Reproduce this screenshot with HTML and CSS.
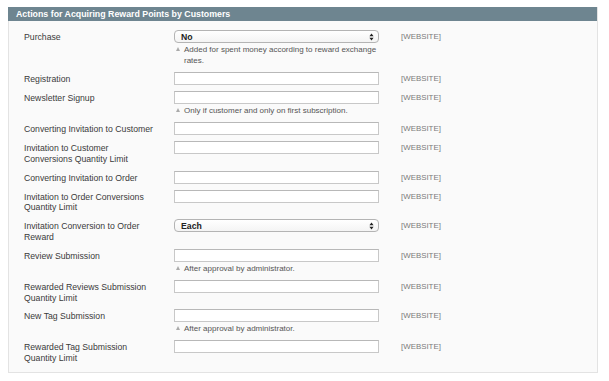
FILE: index.html
```html
<!DOCTYPE html>
<html lang="en">
<head>
  <meta charset="UTF-8" />
  <title>Reward Points</title>
  <link rel="stylesheet" href="styles.css">
</head>
<body>
  <div class="section">
    <div class="section-head">Actions for Acquiring Reward Points by Customers</div>
    <div class="section-body">
      <div class="form-grid">
        <div class="label">Purchase</div>
        <div class="value">
          <div class="select"><span>No</span>
            <svg class="arrows" width="5" height="8" viewBox="0 0 5 8"><path d="M2.5 0.5 L4.6 3.2 H0.4 Z M2.5 7.5 L4.6 4.8 H0.4 Z" fill="#222"/></svg>
          </div>
          <div class="note">Added for spent money according to reward exchange rates.</div>
        </div>
        <div class="scope">[WEBSITE]</div>

        <div class="label">Registration</div>
        <div class="value"><input type="text" class="input"></div>
        <div class="scope">[WEBSITE]</div>

        <div class="label">Newsletter Signup</div>
        <div class="value">
          <input type="text" class="input">
          <div class="note">Only if customer and only on first subscription.</div>
        </div>
        <div class="scope">[WEBSITE]</div>

        <div class="label">Converting Invitation to Customer</div>
        <div class="value"><input type="text" class="input"></div>
        <div class="scope">[WEBSITE]</div>

        <div class="label">Invitation to Customer Conversions Quantity Limit</div>
        <div class="value"><input type="text" class="input"></div>
        <div class="scope">[WEBSITE]</div>

        <div class="label">Converting Invitation to Order</div>
        <div class="value"><input type="text" class="input"></div>
        <div class="scope">[WEBSITE]</div>

        <div class="label">Invitation to Order Conversions Quantity Limit</div>
        <div class="value"><input type="text" class="input"></div>
        <div class="scope">[WEBSITE]</div>

        <div class="label">Invitation Conversion to Order Reward</div>
        <div class="value">
          <div class="select"><span>Each</span>
            <svg class="arrows" width="5" height="8" viewBox="0 0 5 8"><path d="M2.5 0.5 L4.6 3.2 H0.4 Z M2.5 7.5 L4.6 4.8 H0.4 Z" fill="#222"/></svg>
          </div>
        </div>
        <div class="scope">[WEBSITE]</div>

        <div class="label">Review Submission</div>
        <div class="value">
          <input type="text" class="input">
          <div class="note">After approval by administrator.</div>
        </div>
        <div class="scope">[WEBSITE]</div>

        <div class="label">Rewarded Reviews Submission Quantity Limit</div>
        <div class="value"><input type="text" class="input"></div>
        <div class="scope">[WEBSITE]</div>

        <div class="label">New Tag Submission</div>
        <div class="value">
          <input type="text" class="input">
          <div class="note">After approval by administrator.</div>
        </div>
        <div class="scope">[WEBSITE]</div>

        <div class="label">Rewarded Tag Submission Quantity Limit</div>
        <div class="value"><input type="text" class="input"></div>
        <div class="scope">[WEBSITE]</div>
      </div>
    </div>
  </div>
</body>
</html>
```

FILE: styles.css
```css
html, body {
  margin: 0;
  padding: 0;
  background: #fff;
  color: #333;
  font-family: "Liberation Sans", Arial, sans-serif;
}

.section {
  width: 590px;
  margin: 7px 0 0 8px;
}

.section-head {
  height: 14px;
  line-height: 14px;
  padding-left: 8px;
  background: #6e8590;
  color: #fff;
  font-size: 8.8px;
  font-weight: bold;
  border-right: 1px solid #e3e3e3;
}

.section-body {
  background: #fafafa;
  border: 1px solid #e3e3e3;
  border-top: none;
  padding: 9px 0 8px 15px;
}

.form-grid {
  display: grid;
  grid-template-columns: 150px 205px auto;
  row-gap: 6px;
}

.label {
  font-size: 8.7px;
  line-height: 10.8px;
  padding-top: 2px;
  padding-right: 16px;
  color: #3a3a3a;
}

.value {
  display: flex;
  flex-direction: column;
}

.input {
  box-sizing: border-box;
  width: 205px;
  height: 13px;
  margin: 0;
  padding: 0 3px;
  border: 1px solid #c8c8c8;
  border-top-color: #b8b8b8;
  background: #fff;
  font: 8px "Liberation Sans", Arial, sans-serif;
}

.select {
  box-sizing: border-box;
  width: 205px;
  height: 13px;
  display: flex;
  align-items: center;
  justify-content: space-between;
  padding: 0 4px 0 6px;
  border: 1px solid #b4b4b4;
  border-radius: 4px;
  background: linear-gradient(#fff, #f4f4f4);
  font-size: 8.7px;
  font-weight: bold;
  color: #222;
}

.arrows {
  display: block;
}

.note {
  position: relative;
  margin-top: 1px;
  margin-right: -4px;
  padding-left: 10px;
  font-size: 8px;
  line-height: 11px;
  color: #555;
}

.note::before {
  content: "";
  position: absolute;
  left: 2px;
  top: 3px;
  border-left: 2.5px solid transparent;
  border-right: 2.5px solid transparent;
  border-bottom: 4px solid #aaa;
}

.scope {
  padding-left: 22px;
  font-size: 7.9px;
  line-height: 13px;
  color: #7a7a7a;
}
```
